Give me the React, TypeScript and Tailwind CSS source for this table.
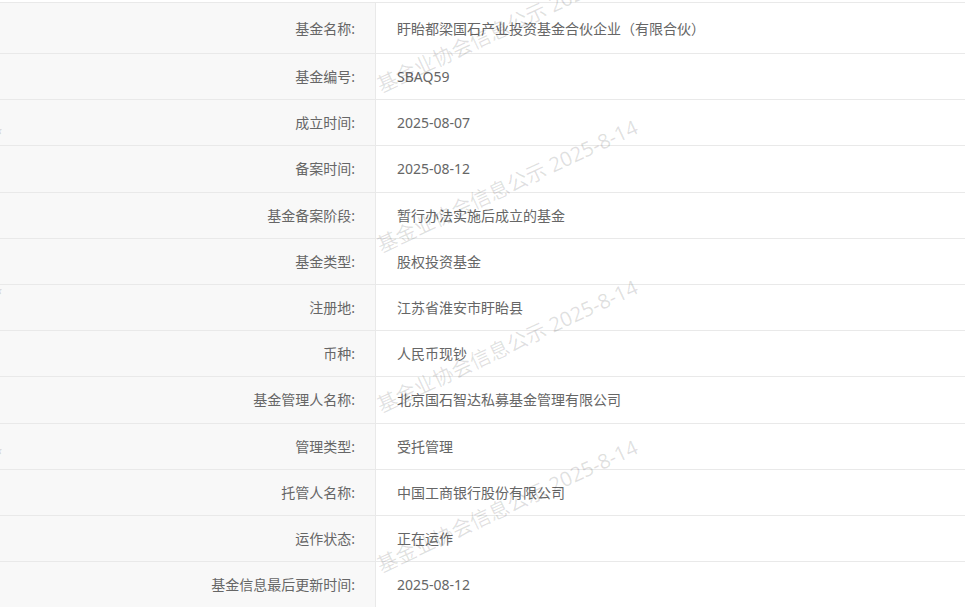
const rows: [string, string][] = [
  ["基金名称:", "盱眙都梁国石产业投资基金合伙企业（有限合伙）"],
  ["基金编号:", "SBAQ59"],
  ["成立时间:", "2025-08-07"],
  ["备案时间:", "2025-08-12"],
  ["基金备案阶段:", "暂行办法实施后成立的基金"],
  ["基金类型:", "股权投资基金"],
  ["注册地:", "江苏省淮安市盱眙县"],
  ["币种:", "人民币现钞"],
  ["基金管理人名称:", "北京国石智达私募基金管理有限公司"],
  ["管理类型:", "受托管理"],
  ["托管人名称:", "中国工商银行股份有限公司"],
  ["运作状态:", "正在运作"],
  ["基金信息最后更新时间:", "2025-08-12"],
];

// watermark grid: every ~636px across, 160px down
const marks: { x: number; y: number }[] = [];
for (let j = -1; j <= 0; j++) {
  for (let k = -2; k <= 2; k++) {
    marks.push({ x: 382 + j * 636, y: 235 + k * 160 });
  }
}

export default function App() {
  return (
    <div
      className="relative h-[607px] w-[965px] overflow-hidden bg-white pt-[2px] text-[14px] text-[#666]"
      style={{ fontFamily: '"Noto Sans", "Noto Sans CJK SC", sans-serif' }}
    >
      <div className="border-t border-[#e9e9e9]">
        {rows.map(([label, value], i) => (
          <div
            key={label}
            className={
              "flex border-b border-[#e9e9e9] " + (i === 0 ? "h-[51px]" : "h-[46.2px]")
            }
          >
            <div className="flex w-[376px] shrink-0 items-center justify-end border-r border-[#e9e9e9] bg-[#f8f8f8] pr-[20px]">
              {label}
            </div>
            <div className="flex flex-1 items-center pl-[21px]">{value}</div>
          </div>
        ))}
      </div>

      {/* watermark overlay */}
      <div className="pointer-events-none absolute inset-0 overflow-hidden">
        {marks.map((m, i) => (
          <span
            key={i}
            className="absolute origin-bottom-left -rotate-[25deg] whitespace-nowrap text-[20.5px] leading-[20px] text-black/[0.12]"
            style={{ left: m.x, top: m.y }}
          >
            基金业协会信息公示 2025-8-14
          </span>
        ))}
      </div>
    </div>
  );
}
